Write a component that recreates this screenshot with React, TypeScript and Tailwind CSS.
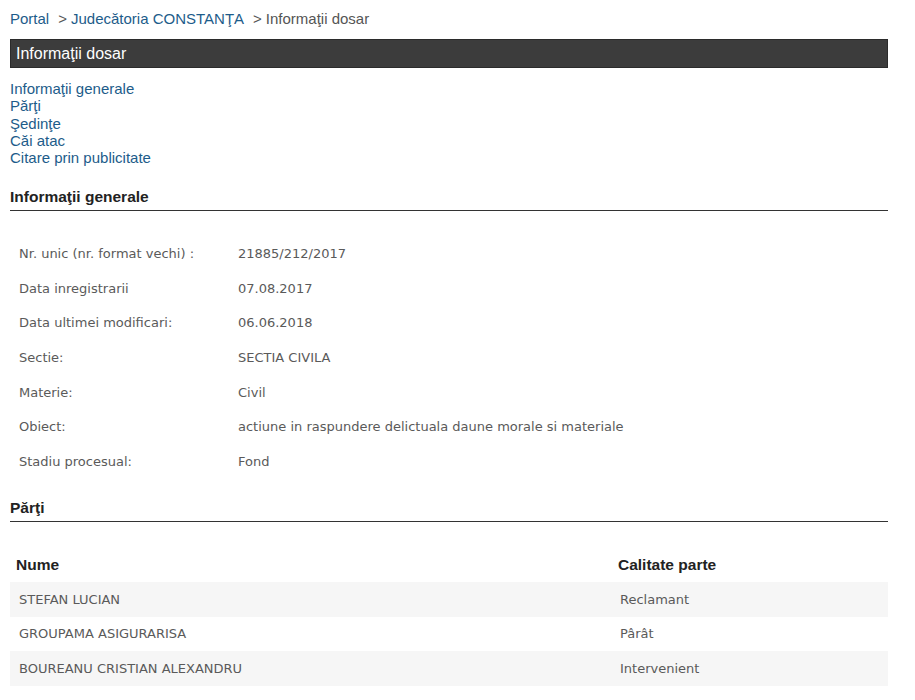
import React from "react";

const info: [string, string][] = [
  ["Nr. unic (nr. format vechi) :", "21885/212/2017"],
  ["Data inregistrarii", "07.08.2017"],
  ["Data ultimei modificari:", "06.06.2018"],
  ["Sectie:", "SECTIA CIVILA"],
  ["Materie:", "Civil"],
  ["Obiect:", "actiune in raspundere delictuala daune morale si materiale"],
  ["Stadiu procesual:", "Fond"],
];

const parti: [string, string][] = [
  ["STEFAN LUCIAN", "Reclamant"],
  ["GROUPAMA ASIGURARISA", "Pârât"],
  ["BOUREANU CRISTIAN ALEXANDRU", "Intervenient"],
];

export default function App() {
  return (
    <div className="w-[915px] h-[700px] overflow-hidden bg-white font-['Liberation_Sans',Arial,sans-serif]">
      <div className="pl-[10px] w-[888px]">
        {/* breadcrumb */}
        <div className="pt-[10px] text-[15px] leading-[18px] flex">
          <span className="text-[#1d5c8a]">Portal</span>
          <span className="text-[#555] ml-[9px] mr-[4px]">&gt;</span>
          <span className="text-[#1d5c8a]">Judecătoria CONSTANŢA</span>
          <span className="text-[#555] ml-[9px] mr-[4px]">&gt;</span>
          <span className="text-[#555]">Informaţii dosar</span>
        </div>

        {/* dark bar */}
        <div className="mt-[11px] h-[29px] bg-[#3c3c3c] border border-[#2b2b2b] flex items-center pl-[5px]">
          <span className="text-white text-[16px] leading-[20px]">Informaţii dosar</span>
        </div>

        {/* links */}
        <div className="mt-[12px] flex flex-col text-[15px] leading-[17.25px] text-[#1d5c8a]">
          <a>Informaţii generale</a>
          <a>Părţi</a>
          <a>Şedinţe</a>
          <a>Căi atac</a>
          <a>Citare prin publicitate</a>
        </div>

        {/* info generale */}
        <div className="mt-[21px] pb-[3px] border-b border-[#333] text-[15.5px] leading-[20px] font-bold text-[#222]">
          Informaţii generale
        </div>
        <div className="mt-[25px] font-['DejaVu_Sans',Verdana,sans-serif] text-[13px] text-[#5a5a5a]">
          {info.map(([k, v]) => (
            <div key={k} className="h-[34.7px] flex items-center">
              <div className="w-[228px] pl-[9px]">{k}</div>
              <div>{v}</div>
            </div>
          ))}
        </div>

        {/* parti */}
        <div className="mt-[19px] pb-[3px] border-b border-[#333] text-[15.5px] leading-[20px] font-bold text-[#222]">
          Părţi
        </div>
        <div className="mt-[25px]">
          <div className="h-[35px] flex items-center text-[15.5px] font-bold text-[#222]">
            <div className="w-[608px] pl-[6px]">Nume</div>
            <div>Calitate parte</div>
          </div>
          {parti.map(([n, c], i) => (
            <div
              key={n}
              className={
                "h-[34.7px] flex items-center font-['DejaVu_Sans',Verdana,sans-serif] text-[13px] text-[#5a5a5a] " +
                (i % 2 === 0 ? "bg-[#f6f6f6]" : "bg-white")
              }
            >
              <div className="w-[608px] pl-[9px]">{n}</div>
              <div className="pl-[2px]">{c}</div>
            </div>
          ))}
        </div>
      </div>
    </div>
  );
}
